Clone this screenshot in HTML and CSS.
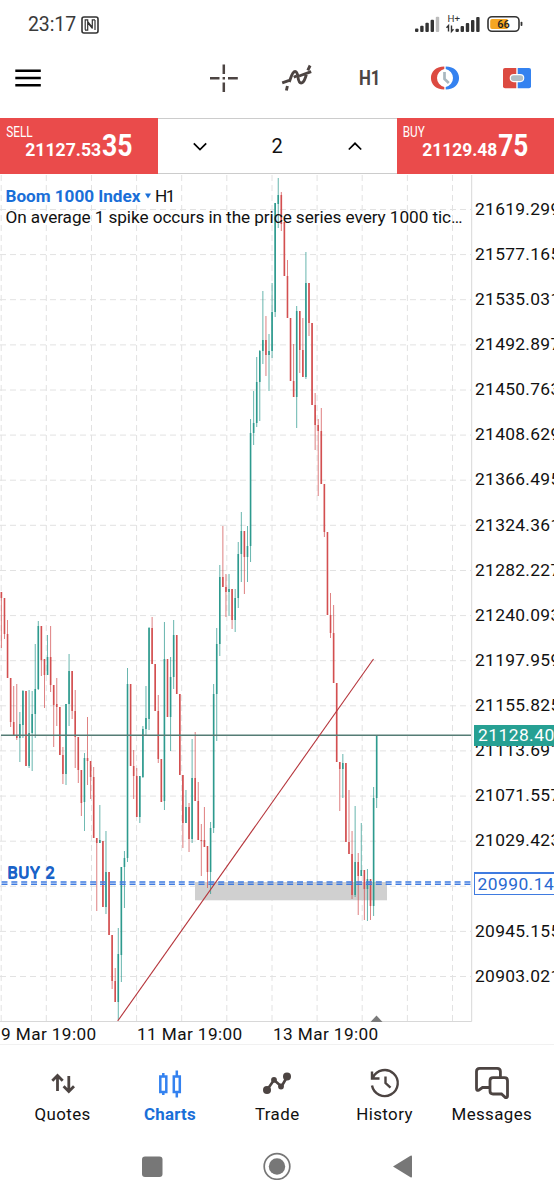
FILE: index.html
```html
<!DOCTYPE html>
<html lang="en">
<head>
<meta charset="utf-8">
<title>Boom 1000 Index</title>
<link rel="stylesheet" href="styles.css">
</head>
<body>
<div class="app">
  <header class="status">
    <div class="status-left">
      <span class="clock">23:17</span>
      <svg class="nfc" width="18" height="18" viewBox="0 0 18 18"><rect x="1" y="1" width="16" height="16" rx="2" fill="none" stroke="#333" stroke-width="1.6"/><path d="M4 14.200H6.700V5.500l4.600 5.800V8M14 3.800H11.300v8.500M6.700 5.500V3.800H4.200v10M11.300 12.500L6.700 6.700M14 4v10" fill="none" stroke="#333" stroke-width="1.200"/></svg>
    </div>
    <svg class="signals" width="110" height="20" viewBox="0 0 110 20">
      <g fill="#333"><rect x="0" y="13.5" width="3.4" height="3.5" rx="1"/><rect x="5.2" y="10.8" width="3.4" height="6.2" rx="1"/><rect x="10.4" y="7.8" width="3.4" height="9.2" rx="1"/><rect x="15.6" y="4.8" width="3.4" height="12.2" rx="1"/></g>
      <rect x="20.8" y="1.8" width="3.4" height="15.2" rx="1" fill="#bbb"/>
      <text x="32.5" y="7" class="net" textLength="12.5" lengthAdjust="spacingAndGlyphs">H+</text>
      <path d="M33.500 16.500v-6l-2 2.300M36.500 10.500v6l2-2.300" fill="none" stroke="#333" stroke-width="1.400"/>
      <g fill="#333"><rect x="40.5" y="13.8" width="3.4" height="3.2" rx="1"/><rect x="45.6" y="11" width="3.4" height="6" rx="1"/><rect x="50.8" y="8" width="3.4" height="9" rx="1"/><rect x="56" y="5" width="3.4" height="12" rx="1"/><rect x="61.2" y="2" width="3.4" height="15" rx="1"/></g>
      <rect x="73" y="1.700" width="31" height="14.600" rx="4" fill="#fff" stroke="#333" stroke-width="1.600"/>
      <path d="M77 4h15.500v10H77q-1.800 0-1.800-2V6q0-2 1.800-2z" fill="#f5a623"/>
      <rect x="105.600" y="6.800" width="1.800" height="4.200" rx=".8" fill="#333"/>
      <text x="88.500" y="13.200" class="batt" text-anchor="middle">66</text>
    </svg>
  </header>

  <nav class="toolbar">
    <svg width="28" height="28" viewBox="0 0 28 28"><path d="M1.300 6.800h25.500M1.300 14h25.500M1.300 21.200h25.500" stroke="#000" stroke-width="2.600"/></svg>
    <div class="tools">
      <svg width="30" height="30" viewBox="0 0 30 30"><path d="M14.800 1.500v9.500M14.800 19.500v9.500M1 15.300h9.500M19 15.300h9.800M13.600 15.300h2.400" stroke="#4c4442" stroke-width="2.500"/></svg>
      <svg width="32" height="30" viewBox="0 0 32 30"><path d="M5.400 27.500l1-4.500M8.300 19c1.600-4.600 3-10.500 5.800-10.500 4.200 0 1.500 11.500 6 11.500 3.200 0 4-5 5.300-8.200M26.800 7.300l2.300-4.800M1.200 19.800l8.500-3M12.800 14.200l2.500-1.200M18.200 13l12-4.300" fill="none" stroke="#4c4442" stroke-width="2.900"/></svg>
      <svg width="28" height="30" viewBox="0 0 28 30"><text x="3" y="22.200" class="tf" textLength="21.500" lengthAdjust="spacingAndGlyphs">H1</text></svg>
      <svg width="30" height="30" viewBox="0 0 30 30"><path d="M14.300 3.500C-3.500 3.500-3.500 26.500 14.300 26.500V24A9.200 9.200 0 0 1 14.300 6z" fill="#dc4a41"/><path d="M15.700 3.500C33.500 3.500 33.500 26.500 15.700 26.500V24A9.200 9.200 0 0 0 15.700 6z" fill="#3482f0"/><path d="M14.500 9v7l4.300 4" fill="none" stroke="#a9b7bf" stroke-width="2.700"/></svg>
      <svg width="30" height="30" viewBox="0 0 30 30"><path d="M3 5h11.300v20.300H3q-2 0-2-2V7q0-2 2-2z" fill="#dc4a41"/><path d="M15.700 5h11.300q2 0 2 2v16.300q0 2-2 2H15.700z" fill="#3482f0"/><rect x="7.700" y="11" width="14.600" height="8.200" rx="4.100" fill="#fff"/><rect x="8.800" y="12.200" width="12.400" height="5.800" rx="2.900" fill="#b0bec5"/></svg>
    </div>
  </nav>

  <section class="trade">
    <svg class="price-btn" viewBox="0 0 157 56"><text x="6" y="18.500" class="side" textLength="26.500" lengthAdjust="spacingAndGlyphs">SELL</text><text x="25" y="37.500" class="px" textLength="76" lengthAdjust="spacingAndGlyphs">21127.53</text><text x="101.800" y="38.300" class="px-big" textLength="30.500" lengthAdjust="spacingAndGlyphs">35</text></svg>
    <div class="volume">
      <svg width="14" height="9" viewBox="0 0 14 9"><path d="M.8 1.300L7 7.500l6.200-6.200" fill="none" stroke="#000" stroke-width="1.700"/></svg>
      <span>2</span>
      <svg width="14" height="9" viewBox="0 0 14 9"><path d="M.8 7.500L7 1.300l6.200 6.200" fill="none" stroke="#000" stroke-width="1.700"/></svg>
    </div>
    <svg class="price-btn" viewBox="0 0 157 56"><text x="5.500" y="18.500" class="side" textLength="22" lengthAdjust="spacingAndGlyphs">BUY</text><text x="25" y="37.500" class="px" textLength="75" lengthAdjust="spacingAndGlyphs">21129.48</text><text x="101" y="38.300" class="px-big" textLength="30" lengthAdjust="spacingAndGlyphs">75</text></svg>
  </section>

  <main class="chart">
    <svg class="plot" id="plot" width="474" height="848" viewBox="0 175 474 848">
      <g id="grid" class="grid"></g>
      <rect x="195" y="882" width="192" height="18.300" fill="#d0d0d0"/>
      <g id="candles"></g>
      <path d="M1 735.200H471" stroke="#557c75" stroke-width="1.400"/>
      <path d="M0 882H471M0 884.200H471" stroke="#3f7be0" stroke-width="1.600" stroke-dasharray="6 3.850" stroke-dashoffset="-1.500"/>
      <path d="M117.700 1021L373.500 659" stroke="#b5343a" stroke-width="1.100"/>
      <path d="M471.700 175V1021.500H0" fill="none" stroke="#d8d8d8" stroke-width="1"/>
      <path d="M370.500 1022l6-6.500 6 6.500z" fill="#7a7a7a"/>
      <text x="5.500" y="202" class="symbol" textLength="135">Boom 1000 Index</text>
      <path d="M145 193.500h6l-3 5z" fill="#1a6fd8"/>
      <text x="155" y="202" class="label" textLength="20.500">H1</text>
      <text x="5.500" y="223.300" class="label" textLength="457">On average 1 spike occurs in the price series every 1000 tic…</text>
      <g class="order"><text x="7.300" y="877.500" textLength="47.500">BUY 2</text><text x="7.300" y="879" textLength="47.500">BUY 2</text></g>
    </svg>
    <div class="axis">
      <div class="prices" id="prices"></div>
      <div class="tag current">21128.40</div>
      <div class="tag open">20990.14</div>
    </div>
  </main>
  <div class="times"><span>9 Mar 19:00</span><span>11 Mar 19:00</span><span>13 Mar 19:00</span></div>

  <nav class="tabs">
    <a class="tab"><svg width="34" height="34" viewBox="0 0 34 34"><path d="M11.500 26V11.500M6.300 15.700l5.200-5.200 5.200 5.200M22.800 11v14.500M17.600 21.300l5.200 5.200 5.200-5.200" fill="none" stroke="#4c4442" stroke-width="2.800"/></svg><span>Quotes</span></a>
    <a class="tab active"><svg width="34" height="34" viewBox="0 0 34 34"><path d="M7.300 11.500h6v15.500h-6zM20.800 11.500h6v15.500h-6zM10.300 8v3M10.300 27v3M23.800 5.500v6M23.800 27v5.500" fill="none" stroke="#3482f0" stroke-width="2.500"/></svg><span>Charts</span></a>
    <a class="tab"><svg width="34" height="34" viewBox="0 0 34 34"><path d="M7 25l7-10 7.500 6.500L27 12" fill="none" stroke="#4c4442" stroke-width="2.600" stroke-linejoin="round"/><g fill="#4c4442"><circle cx="7" cy="25" r="4"/><circle cx="14" cy="14.800" r="2.900"/><circle cx="21" cy="21.500" r="2.900"/><circle cx="27" cy="11.500" r="4"/></g></svg><span>Trade</span></a>
    <a class="tab"><svg width="34" height="34" viewBox="0 0 34 34"><path d="M5 12.500A13 13 0 1 1 4 20.500M4 6.500v7h7.500M17.500 11.500V18l5 4.700" fill="none" stroke="#4c4442" stroke-width="2.400"/></svg><span>History</span></a>
    <a class="tab"><svg width="38" height="34" viewBox="0 0 38 34"><path d="M16 22.500H9.500l-3.800 2.700q-2.200.8-2.200-1.700V6.500Q3.500 3.300 6.700 3.300h17.500q3.200 0 3.200 3.200V12" fill="none" stroke="#4c4442" stroke-width="2.800"/><path d="M20 12.700h11.500q3 0 3 3V31q0 2-2 1.600L28.500 29H20q-3 0-3-3V15.700q0-3 3-3z" fill="#fff" stroke="#4c4442" stroke-width="2.800"/></svg><span>Messages</span></a>
  </nav>

  <footer class="system">
    <svg width="28" height="28" viewBox="0 0 28 28"><rect x="4" y="4.500" width="20.500" height="20.500" rx="3" fill="#777"/></svg>
    <svg width="28" height="28" viewBox="0 0 28 28"><circle cx="14" cy="14.500" r="12.800" fill="none" stroke="#777" stroke-width="1.700"/><circle cx="14" cy="14.500" r="8.200" fill="#777"/></svg>
    <svg width="28" height="28" viewBox="0 0 28 28"><path d="M4 14.500L21.500 3.700q1.500-.7 1.500.8v20q0 1.500-1.500.8z" fill="#777"/></svg>
  </footer>
</div>
<script src="chart.js"></script>
</body>
</html>
```
FILE: styles.css
```css
* { box-sizing: border-box; }
body { margin: 0; background: #fff; font-family: Roboto, "Noto Sans", sans-serif; color: #111; }
svg { display: block; flex: none; }
.app { width: 554px; height: 1200px; display: flex; flex-direction: column; overflow: hidden; }

.status { height: 49px; padding: 0 29.500px 0 28px; display: flex; justify-content: space-between; align-items: center; }
.status-left { display: flex; align-items: center; gap: 4px; }
.clock { font-size: 19.500px; color: #3a3a3a; width: 49px; letter-spacing: -.1px; white-space: nowrap; }
.signals { width: 110px; }
.net { font-size: 9px; fill: #333; }
.batt { font-size: 11px; font-weight: 500; fill: #222; }

.toolbar { height: 69px; padding: 0 22px 11px 14px; display: flex; justify-content: space-between; align-items: center; }
.tools { display: grid; grid-template-columns: 72px 75px 74px 72.500px 30px; align-items: center; width: 323.500px; }
.tf { font-size: 20px; font-weight: 700; fill: #4c4442; }

.trade { height: 57px; display: grid; grid-template-columns: 157.500px 1fr 157.500px; }
.price-btn { width: 100%; height: 56px; background: #ea4b4b; fill: #fff; }
.side { font-size: 14px; }
.px { font-size: 19px; font-weight: 700; }
.px-big { font-size: 32px; font-weight: 700; }
.volume { height: 56px; border-top: 1px solid #ccc; border-bottom: 1px solid #ccc; display: flex; justify-content: space-between; align-items: center; padding: 0 35px; font-size: 20px; }

.chart { height: 847px; display: grid; grid-template-columns: 473px 1fr; overflow: hidden; }
.grid { stroke: #e2e2e2; stroke-width: 1; stroke-dasharray: 6 4; }
.up { stroke: #2d9a8e; }
.down { stroke: #d34f50; }
.body { stroke-width: 1.600; }
.wick { stroke-width: .9; opacity: .8; }
.symbol { font-size: 17.200px; font-weight: 700; fill: #1a6fd8; }
.label { font-size: 17.200px; fill: #111; }
.order { font-size: 17px; font-weight: 500; fill: #1a63c8; }
.axis { position: relative; overflow: hidden; }
.prices { padding: 11.800px 0 0 2px; }
.price { height: 45.120px; line-height: 45.120px; font-size: 17.400px; letter-spacing: .3px; white-space: nowrap; }
.tag { position: absolute; font-size: 17.400px; letter-spacing: .45px; white-space: nowrap; }
.current { left: .5px; top: 550px; width: 90px; height: 20.500px; line-height: 21px; padding-left: 4.500px; background: #26a093; color: #fff; }
.open { left: 1px; top: 697px; width: 90px; height: 22.500px; line-height: 20.500px; padding-left: 2.500px; background: #fff; color: #2868d0; border: 1.500px solid #3f7be0; border-top-width: 2.500px; }
.times { height: 23px; border-bottom: 1px solid #f1f1f1; display: grid; grid-template-columns: 136px 136px 1fr; font-size: 17.200px; line-height: 24px; letter-spacing: .4px; white-space: nowrap; }
.times span { padding-left: 1px; }

.tabs { height: 83px; display: grid; grid-template-columns: 9px repeat(5, 107.300px); padding-top: 20px; }
.tabs::before { content: ""; }
.tab { display: flex; flex-direction: column; align-items: center; gap: 4px; font-size: 16.900px; line-height: 22px; letter-spacing: .4px; }
.active { color: #1a6fd8; font-weight: 700; letter-spacing: .2px; }
.system { height: 72px; display: flex; justify-content: center; gap: 97.500px; padding-top: 24px; }
```
FILE: chart.js
```js
// Each candle: direction, high, body top, body bottom, low (plot coordinates)
const data = `r 592 592 598 648|r 598 598 634 639|r 620 634 678 678|r 678 678 722 727|r 686 722 735 735|r 684 735 738 740|g 712 724 738 762|g 690 691 725 738|r 691 691 766 766|g 690 733 766 768|g 691 714 733 771|g 644 689 714 738|g 621 626 689 690|r 626 626 660 676|r 659 659 675 708|g 635 657 675 675|r 626 657 685 692|r 685 685 705 747|r 678 704 707 726|r 707 707 755 755|r 747 755 774 784|g 704 704 774 785|g 654 671 704 726|r 671 671 711 719|r 690 711 737 768|r 737 737 770 783|r 770 770 803 816|g 753 758 802 831|r 717 758 761 785|r 761 761 777 799|r 767 777 838 838|r 838 838 843 911|g 805 840 843 843|r 841 841 907 907|g 831 872 907 914|r 872 872 935 935|r 935 935 981 989|r 968 981 1002 1002|g 928 954 1002 1020|g 867 867 955 982|g 851 858 867 908|g 668 684 858 862|r 684 684 766 766|r 750 766 776 799|r 768 776 817 817|g 776 776 817 823|g 726 729 777 778|g 686 718 729 735|g 627 628 719 730|r 617 628 664 664|r 664 664 711 711|r 695 711 759 763|r 759 759 802 802|g 622 659 801 810|r 659 659 717 717|g 657 677 717 751|g 620 635 677 689|r 635 635 694 694|r 694 694 775 775|r 775 775 823 848|g 790 807 823 823|r 803 807 839 852|g 739 778 839 843|r 732 778 801 801|r 782 801 840 840|r 824 840 841 876|r 807 840 847 847|r 846 846 872 888|g 822 828 872 894|g 684 694 828 833|g 628 644 694 741|g 565 577 644 656|r 526 577 587 587|r 574 587 592 617|g 574 589 592 616|r 589 589 620 629|g 589 598 620 632|g 542 554 598 608|g 512 531 554 582|r 531 531 557 594|g 526 546 557 582|g 419 433 546 562|g 391 423 433 445|g 357 382 423 427|g 350 351 382 421|g 291 340 351 364|r 316 340 355 376|g 334 351 355 391|g 283 312 351 358|g 203 203 312 317|g 178 195 204 228|r 192 195 224 231|r 222 222 276 276|r 260 276 318 318|r 318 318 381 381|r 344 381 397 397|g 306 311 397 428|r 311 311 350 373|r 318 350 377 377|g 252 283 377 379|r 283 283 323 336|r 323 323 405 405|r 393 405 425 450|r 419 425 431 496|r 408 431 484 484|r 484 484 532 537|r 532 532 615 615|r 593 615 633 638|r 605 633 683 683|r 683 683 762 762|r 762 762 769 811|g 754 763 769 798|r 763 763 842 842|r 790 842 854 854|r 831 854 895 899|g 806 862 895 897|r 853 862 876 915|g 823 870 876 876|r 870 870 889 920|g 869 879 889 921|r 879 879 906 920|g 787 798 906 916|g 735 735 798 808`;

const line = (d, cls) => `<path d="${d}"${cls ? ` class="${cls}"` : ''}/>`;

let candles = '';
data.split('|').forEach((row, i) => {
  const [dir, high, top, bottom, low] = row.split(' ');
  const x = (1.4 + i * 3.076).toFixed(2);
  const tone = dir === 'g' ? 'up' : 'down';
  candles += line(`M${x} ${high}V${low}`, `wick ${tone}`) + line(`M${x} ${top}V${bottom}`, `body ${tone}`);
});
document.getElementById('candles').innerHTML = candles;

let grid = '';
for (let i = 0; i < 18; i++) grid += line(`M0 ${(209.5 + i * 45.12).toFixed(1)}H471`);
for (let i = 0; i < 11; i++) grid += line(`M${(1.2 + i * 45.13).toFixed(1)} 175V1021`);
document.getElementById('grid').innerHTML = grid;

let prices = '';
for (let i = 0; i < 18; i++) prices += `<div class="price">${(21619.299 - i * 42.134).toFixed(3)}</div>`;
document.getElementById('prices').innerHTML = prices;
```
